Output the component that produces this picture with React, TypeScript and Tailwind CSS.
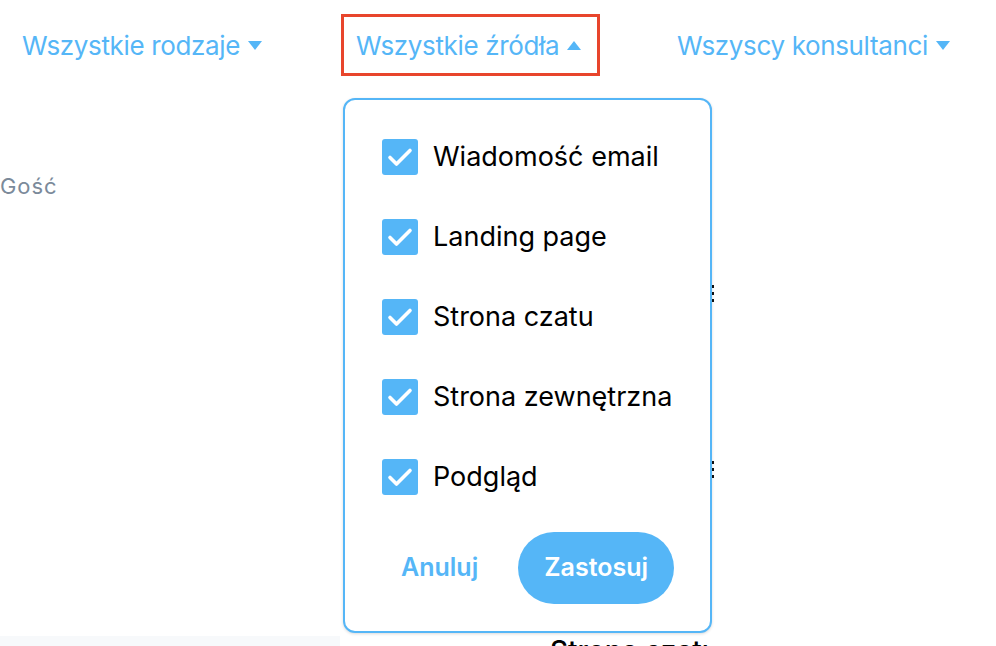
import { useState } from "react";

const BLUE = "#55b6f7";

const sources = [
  "Wiadomość email",
  "Landing page",
  "Strona czatu",
  "Strona zewnętrzna",
  "Podgląd",
];

function Caret({ up = false }: { up?: boolean }) {
  return (
    <svg width="14" height="9" viewBox="0 0 14 9" className="shrink-0">
      <path d={up ? "M0 9 L7 0 L14 9 Z" : "M0 0 L14 0 L7 9 Z"} fill={BLUE} />
    </svg>
  );
}

function Kebab() {
  return (
    <svg width="4" height="18" viewBox="0 0 4 18">
      <rect x="0" y="0" width="3" height="3" fill="#111" />
      <rect x="0" y="7" width="3" height="3" fill="#111" />
      <rect x="0" y="14" width="3" height="3" fill="#111" />
    </svg>
  );
}

function Checkbox({ checked }: { checked: boolean }) {
  return (
    <span className="w-[36px] h-[36px] rounded-[3px] bg-[#55b6f7] flex items-center justify-center shrink-0">
      {checked && (
        <svg width="26" height="20" viewBox="0 0 26 20">
          <path d="M3 10.5 L9.5 17 L23 3.5" stroke="#fff" strokeWidth="3.6" fill="none" strokeLinecap="round" strokeLinejoin="round" />
        </svg>
      )}
    </span>
  );
}

export default function App() {
  const [checked, setChecked] = useState(sources.map(() => true));

  return (
    <div
      className="relative w-[996px] h-[646px] overflow-hidden bg-white"
      style={{ fontFamily: "Inter, 'Noto Sans', sans-serif" }}
    >
      {/* filter bar */}
      <div className="flex items-center h-[90px] pl-[22px] text-[26px] text-[#55b6f7]">
        <div className="w-[319px] flex items-center gap-[8px]">
          <span className="tracking-[-0.35px]">Wszystkie rodzaje</span>
          <Caret />
        </div>
        <div className="w-[259px] h-[62px] border-[3px] border-[#e8452c] flex items-center gap-[8px] pl-[12px]">
          <span className="tracking-[-0.35px]">Wszystkie źródła</span>
          <Caret up />
        </div>
        <div className="ml-[77px] flex items-center gap-[8px]">
          <span className="tracking-[-0.35px]">Wszyscy konsultanci</span>
          <Caret />
        </div>
      </div>

      {/* list behind */}
      <div className="h-[110px] pt-[84px] text-[22px] leading-[24px] tracking-[0.9px] text-[#7b8a9a]">Gość</div>
      <div className="h-[180px] flex items-center pl-[711px] pt-[8px]">
        <Kebab />
      </div>
      <div className="h-[180px] flex items-center pl-[711px]">
        <Kebab />
      </div>
      <div className="h-[76px]" />
      <div className="flex h-[10px]">
        <div className="w-[340px] bg-[#f7f9fb]" />
        <div className="ml-[210px] w-[162px] overflow-hidden">
          <div className="whitespace-nowrap text-[28px] leading-[32px] font-medium text-black -mt-[1px]">Strona czatu</div>
        </div>
      </div>

      {/* dropdown */}
      <div className="absolute left-[343px] top-[98px] w-[369px] h-[535px] bg-white border-2 border-[#55b6f7] rounded-[12px] shadow-[0_1px_3px_rgba(0,0,0,0.15)]">
        <div className="pt-[17px] pl-[37px]">
          {sources.map((s, i) => (
            <label
              key={s}
              className="h-[80px] flex items-center gap-[15px] cursor-pointer"
              onClick={() => setChecked(checked.map((c, j) => (j === i ? !c : c)))}
            >
              <Checkbox checked={checked[i]} />
              <span className="text-[27px] text-black">{s}</span>
            </label>
          ))}
        </div>
        <div className="flex items-center mt-[15px] pl-[56px]">
          <button className="text-[25px] font-semibold text-[#55b6f7]">Anuluj</button>
          <button className="ml-[40px] w-[156px] h-[72px] rounded-full bg-[#55b6f7] text-white text-[25px] font-semibold">
            Zastosuj
          </button>
        </div>
      </div>
    </div>
  );
}
